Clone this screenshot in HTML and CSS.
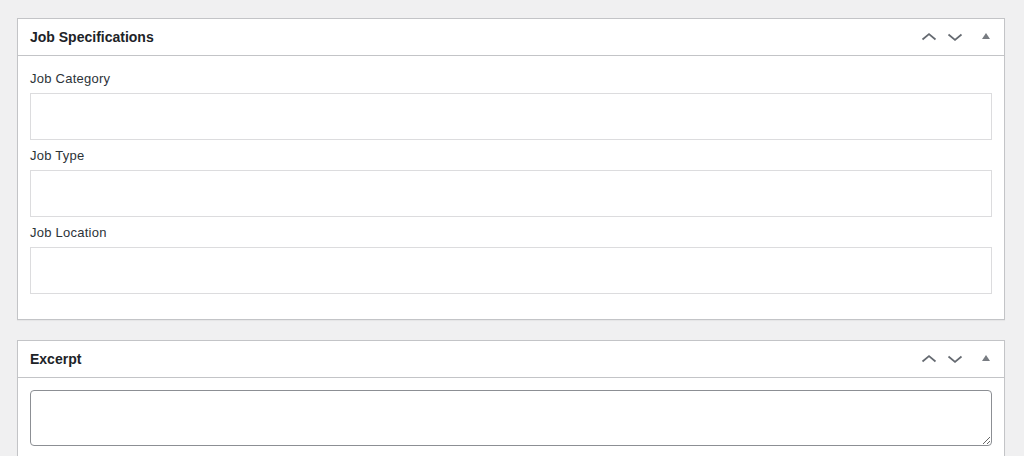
FILE: index.html
```html
<!DOCTYPE html>
<html>
<head>
<meta charset="utf-8">
<link rel="stylesheet" href="styles.css">
</head>
<body>
<div class="wrap">
  <section class="postbox">
    <div class="postbox-header">
      <h2 class="hndle">Job Specifications</h2>
      <div class="handle-actions">
        <button class="order-btn" aria-label="Move up">
          <svg width="16" height="10" viewBox="0 0 16 10"><path d="M1.5 7.5 L8 2 L14.5 7.5" fill="none" stroke="#646970" stroke-width="1.7"/></svg>
        </button>
        <button class="order-btn" aria-label="Move down">
          <svg width="16" height="10" viewBox="0 0 16 10"><path d="M1.5 2.5 L8 8 L14.5 2.5" fill="none" stroke="#646970" stroke-width="1.7"/></svg>
        </button>
        <button class="toggle-btn" aria-label="Toggle panel">
          <span class="tri"></span>
        </button>
      </div>
    </div>
    <div class="inside fields">
      <div class="field">
        <label class="field-label">Job Category</label>
        <input class="text-input" type="text">
      </div>
      <div class="field">
        <label class="field-label">Job Type</label>
        <input class="text-input" type="text">
      </div>
      <div class="field">
        <label class="field-label">Job Location</label>
        <input class="text-input" type="text">
      </div>
    </div>
  </section>

  <section class="postbox">
    <div class="postbox-header">
      <h2 class="hndle">Excerpt</h2>
      <div class="handle-actions">
        <button class="order-btn" aria-label="Move up">
          <svg width="16" height="10" viewBox="0 0 16 10"><path d="M1.5 7.5 L8 2 L14.5 7.5" fill="none" stroke="#646970" stroke-width="1.7"/></svg>
        </button>
        <button class="order-btn" aria-label="Move down">
          <svg width="16" height="10" viewBox="0 0 16 10"><path d="M1.5 2.5 L8 8 L14.5 2.5" fill="none" stroke="#646970" stroke-width="1.7"/></svg>
        </button>
        <button class="toggle-btn" aria-label="Toggle panel">
          <span class="tri"></span>
        </button>
      </div>
    </div>
    <div class="inside excerpt">
      <textarea class="excerpt-area"></textarea>
    </div>
  </section>
</div>
</body>
</html>
```

FILE: styles.css
```css
html, body {
  margin: 0;
  padding: 0;
  background: #f0f0f1;
  font-family: "Liberation Sans", Arial, sans-serif;
  color: #1d2327;
}

.wrap {
  padding: 18px 19px 0 17px;
  display: flex;
  flex-direction: column;
  gap: 20px;
}

.postbox {
  background: #fff;
  border: 1px solid #c3c4c7;
  box-shadow: 0 1px 1px rgba(0,0,0,0.04);
}

.postbox-header {
  height: 36px;
  border-bottom: 1px solid #c3c4c7;
  display: flex;
  align-items: center;
  justify-content: space-between;
}

.hndle {
  margin: 0;
  padding-left: 12px;
  padding-top: 1px;
  font-size: 14px;
  font-weight: 700;
  line-height: 1.4;
  color: #1d2327;
}

.handle-actions {
  display: flex;
  height: 36px;
}

.order-btn, .toggle-btn {
  border: 0;
  background: none;
  padding: 0;
  margin: 0;
  height: 36px;
  display: flex;
  align-items: center;
  justify-content: center;
  cursor: pointer;
}

.order-btn {
  width: 26px;
}

.toggle-btn {
  width: 36px;
}

.tri {
  width: 0;
  height: 0;
  border-left: 4px solid transparent;
  border-right: 4px solid transparent;
  border-bottom: 6px solid #787c82;
  margin-top: -2px;
}

.fields {
  padding: 7px 12px 25px 12px;
}

.field {
  padding-top: 6px;
  display: flex;
  flex-direction: column;
  gap: 4px;
}

.field-label {
  font-size: 13px;
  line-height: 20px;
  letter-spacing: 0.25px;
  color: #2c3338;
}

.text-input {
  box-sizing: border-box;
  height: 47px;
  width: 100%;
  margin: 0;
  border: 1px solid #dcdcde;
  border-radius: 0;
  background: #fff;
  font-family: inherit;
}

.excerpt {
  padding: 12px 12px 12px 12px;
}

.excerpt-area {
  display: block;
  box-sizing: border-box;
  width: 100%;
  height: 56px;
  margin: 0;
  border: 1px solid #8c8f94;
  border-radius: 4px;
  background: #fff;
  font-family: inherit;
}
```
